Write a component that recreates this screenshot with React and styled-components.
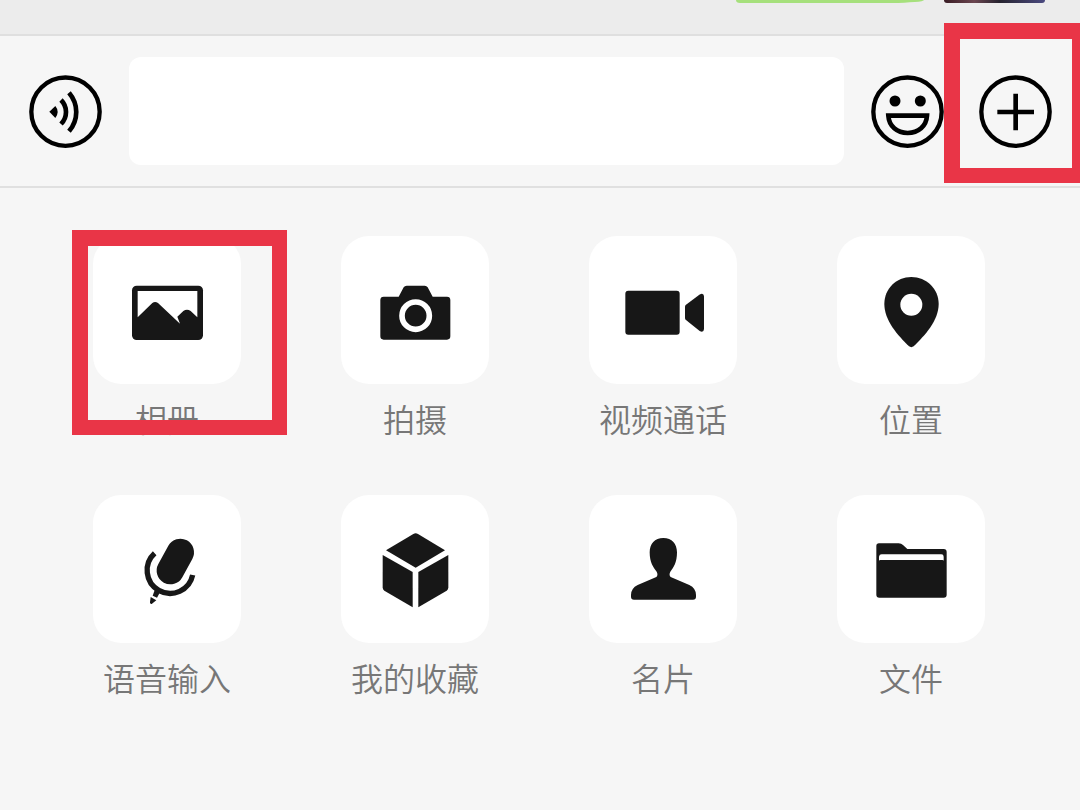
import React from 'react';
import styled, { createGlobalStyle } from 'styled-components';


const GlobalStyle = createGlobalStyle`
  * {
    box-sizing: border-box;
  }
  body {
    margin: 0;
    background: #f6f6f6;
    font-family: "Noto Sans CJK SC", "Liberation Sans", sans-serif;
  }
`;

const INK = '#171717';

const VoiceIcon = () => (
    <svg viewBox="87 222 219 222" fill="none" stroke="#000">
        <circle cx="196.500" cy="335" r="102.500" strokeWidth="13" />
        <path d="M148 335L166 318Q180 335 166 354Z" fill="#000" stroke="none" />
        <path d="M183 300C203 320 203 351 183 372" strokeWidth="14" />
        <path d="M207 278C236 312 236 359 207 394" strokeWidth="14" />
    </svg>
);

const SmileIcon = () => (
    <svg viewBox="453 222 219 222" fill="none" stroke="#000">
        <circle cx="562.500" cy="335" r="102.500" strokeWidth="13" />
        <circle cx="525" cy="303" r="16.500" fill="#000" stroke="none" />
        <circle cx="601" cy="303" r="16.500" fill="#000" stroke="none" />
        <path d="M505 347H621C619 379 595 399 563 399S507 379 505 347Z" strokeWidth="14" />
    </svg>
);

const PlusIcon = () => (
    <svg viewBox="777 222 219 222" fill="none" stroke="#000">
        <circle cx="886.500" cy="335" r="102.500" strokeWidth="13" />
        <path d="M887 281V391M832 336H942" strokeWidth="14" />
    </svg>
);

const AlbumIcon = () => (
    <svg viewBox="99 48 444 444">
        <rect x="216" y="197" width="213" height="163" rx="14" fill={INK} />
        <path
            d="M233 213H412V292L392 273Q381 265 370 273L352 290L360 311L294 249Q285 243 277 249L233 292Z"
            fill="#fff"
        />
    </svg>
);

const CameraIcon = () => (
    <svg viewBox="33 48 444 444">
        <path
            d="M206 230L221 202Q224 197 230 197H284Q290 197 293 202L308 230H351Q361 230 361 240V349Q361 359 351 359H161Q151 359 151 349V240Q151 230 161 230Z"
            fill={INK}
        />
        <circle cx="257" cy="287" r="41" fill="none" stroke="#fff" strokeWidth="17" />
    </svg>
);

const VideoIcon = () => (
    <svg viewBox="27 48 444 444" fill={INK}>
        <rect x="136" y="212" width="163" height="132" rx="9" />
        <path d="M317 255L358 224Q371 217 372 229V327Q371 339 359 333L317 299Q315 297 315 294V260Q315 257 317 255Z" />
    </svg>
);

const LocationIcon = () => (
    <svg viewBox="51 48 444 444">
        <path
            d="M274 171C229 171 193 206 193 252C193 301 233 346 267 379Q274 384 281 379C315 346 356 301 356 252C356 206 319 171 274 171Z"
            fill={INK}
        />
        <circle cx="274" cy="254" r="33" fill="#fff" />
    </svg>
);

const MicIcon = () => (
    <svg viewBox="39 45 444 444" fill="none">
        <path d="M301 217L271 272" stroke={INK} strokeWidth="82" strokeLinecap="round" />
        <path d="M224 220A69 69 0 1 0 338 285" stroke={INK} strokeWidth="16" />
        <path d="M225 328L240 337L231 353L218 347Z" fill={INK} />
        <path d="M212 351L229 361L215 372Q210 373 210 367Z" fill={INK} />
    </svg>
);

const CubeIcon = () => (
    <svg viewBox="33 45 444 444" fill={INK}>
        <path d="M250 162Q257 158 264 162L345 211L257 263L168 211Z" />
        <path d="M158 225L248 276V382L163 332Q158 329 158 322Z" />
        <path d="M355 225L265 276V382L350 332Q355 329 355 322Z" />
    </svg>
);

const PersonIcon = () => (
    <svg viewBox="27 45 444 444">
        <path
            d="M250 174C224 174 209 191 209 217C209 247 220 263 230 275Q235 285 229 291L173 315Q153 325 153 345V350Q153 359 162 359H339Q348 359 348 350V345Q348 325 328 315L272 291Q266 285 271 275C281 263 291 247 291 217C291 191 276 174 250 174Z"
            fill={INK}
        />
    </svg>
);

const FolderIcon = () => (
    <svg viewBox="51 45 444 444">
        <path
            d="M177 190H236Q244 190 249 195L262 207H371Q380 207 380 216V344Q380 353 371 353H178Q169 353 169 344V198Q169 190 177 190Z"
            fill={INK}
        />
        <path d="M177 243V230Q178 223 185 223H364Q371 223 371 230V243Q371 240 367 240H181Q177 240 177 243Z" fill="#fff" />
    </svg>
);

const actions = [
    { label: '相册', icon: AlbumIcon, marked: true },
    { label: '拍摄', icon: CameraIcon },
    { label: '视频通话', icon: VideoIcon },
    { label: '位置', icon: LocationIcon },
    { label: '语音输入', icon: MicIcon },
    { label: '我的收藏', icon: CubeIcon },
    { label: '名片', icon: PersonIcon },
    { label: '文件', icon: FolderIcon },
];

function App() {
    return (
        <Page>
            <GlobalStyle />
            <Messages>
                <Bubble />
                <Avatar />
            </Messages>

            <Toolbar>
                <RoundButton aria-label="语音">
                    <VoiceIcon />
                </RoundButton>
                <MessageInput type="text" aria-label="消息" />
                <ToolbarRight>
                    <RoundButton aria-label="表情">
                        <SmileIcon />
                    </RoundButton>
                    <RoundButton aria-label="更多">
                        <PlusIcon />
                        <Marker $top={-51} $left={-35} $width={143} $height={160} />
                    </RoundButton>
                </ToolbarRight>
            </Toolbar>

            <Panel>
                {actions.map(({ label, icon: Icon, marked }) => (
                    <Action key={label}>
                        <Tile>
                            <Icon />
                            {/* red frame round the entry to tap */}
                            {marked && <Marker $top={-6} $left={-21} $width={215} $height={205} />}
                        </Tile>
                        <Label>{label}</Label>
                    </Action>
                ))}
            </Panel>
        </Page>
    )
}

export default App

const Page = styled.div`
  min-height: 100vh;
  overflow: hidden;
  background: #f6f6f6;
`;

const Messages = styled.div`
  display: flex;
  justify-content: flex-end;
  align-items: flex-start;
  gap: 20px;
  height: 36px;
  padding-right: 35px;
  background: #ececec;
  border-bottom: 2px solid #dfdfdf;
`;

const Bubble = styled.div`
  width: 188px;
  height: 3px;
  background: #a6e07c;
  border-radius: 0 0 32px 4px / 0 0 3px 3px;
`;

const Avatar = styled.div`
  width: 101px;
  height: 3px;
  background: linear-gradient(90deg, #3a1c24, #6b4650 30%, #26232f 55%, #4b4a80);
  border-radius: 0 0 4px 4px;
`;

const Toolbar = styled.div`
  display: flex;
  align-items: center;
  gap: 27px;
  padding: 21px 28px 21px 29px;
  border-bottom: 2px solid #e0e0e0;
`;

const ToolbarRight = styled.div`
  display: flex;
  gap: 35px;
`;

const RoundButton = styled.button`
  position: relative;
  flex: none;
  width: 73px;
  height: 74px;
  padding: 0;
  border: none;
  background: none;

  svg {
    display: block;
    width: 100%;
    height: 100%;
  }
`;

const MessageInput = styled.input`
  flex: 1;
  min-width: 0;
  height: 108px;
  padding: 0 24px;
  border: none;
  border-radius: 12px;
  background: #fff;
  font-size: 32px;
  font-family: inherit;
`;

const Panel = styled.div`
  display: grid;
  grid-template-columns: repeat(4, 1fr);
  row-gap: 59px;
  padding: 48px 45px 48px 43px;
`;

const Action = styled.button`
  display: flex;
  flex-direction: column;
  align-items: center;
  gap: 16px;
  padding: 0;
  border: none;
  background: none;
  font-family: inherit;
`;

const Tile = styled.span`
  position: relative;
  width: 148px;
  height: 148px;
  border-radius: 28px;
  background: #fff;

  svg {
    display: block;
    width: 100%;
    height: 100%;
  }
`;

const Label = styled.span`
  font-size: 32px;
  font-weight: 350;
  line-height: 36px;
  color: #777;
`;

const Marker = styled.span`
  position: absolute;
  z-index: 1;
  top: ${(props) => props.$top}px;
  left: ${(props) => props.$left}px;
  width: ${(props) => props.$width}px;
  height: ${(props) => props.$height}px;
  border: solid #e93547;
  border-width: 16px 15px 15px 16px;
`;
